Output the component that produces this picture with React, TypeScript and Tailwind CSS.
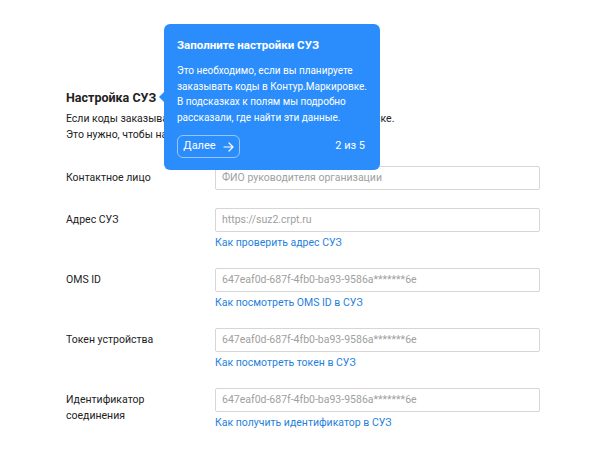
import React from "react";

const rows = [
  { label: "Контактное лицо", placeholder: "ФИО руководителя организации" },
  { label: "Адрес СУЗ", placeholder: "https://suz2.crpt.ru", link: "Как проверить адрес СУЗ" },
  { label: "OMS ID", placeholder: "647eaf0d-687f-4fb0-ba93-9586a*******6e", link: "Как посмотреть OMS ID в СУЗ" },
  { label: "Токен устройства", placeholder: "647eaf0d-687f-4fb0-ba93-9586a*******6e", link: "Как посмотреть токен в СУЗ" },
  { label: "Идентификатор соединения", placeholder: "647eaf0d-687f-4fb0-ba93-9586a*******6e", link: "Как получить идентификатор в СУЗ" },
];

function Hint() {
  return (
    <div className="absolute left-[164px] top-[24px] w-[216px] rounded-[6px] bg-[#2a8dfb] px-[13px] pt-[13px] pb-[12px] text-white">
      {/* arrow */}
      <div className="absolute left-[-5px] top-[68px] h-0 w-0 border-y-[5px] border-r-[5px] border-y-transparent border-r-[#2a8dfb]"></div>
      <div className="text-[11.5px] font-bold leading-[17px]">Заполните настройки СУЗ</div>
      <div className="mt-[9px] whitespace-nowrap text-[10px] leading-[15.5px]">
        Это необходимо, если вы планируете
        <br />
        заказывать коды в Контур.Маркировке.
        <br />
        В подсказках к полям мы подробно
        <br />
        рассказали, где найти эти данные.
      </div>
      <div className="mt-[10px] flex items-center justify-between">
        <button className="flex h-[23px] w-[63px] items-center justify-center gap-[7px] rounded-[6px] border border-white/50 text-[11px]">
          Далее
          <svg width="11" height="10" viewBox="0 0 11 10" fill="none" stroke="white" strokeWidth="1.2" strokeLinecap="round" strokeLinejoin="round">
            <path d="M1 5h9M6 1l4 4-4 4" />
          </svg>
        </button>
        <span className="pr-[2px] text-[11px]">2 из 5</span>
      </div>
    </div>
  );
}

export default function App() {
  return (
    <div className="relative h-[464px] w-[611px] overflow-hidden bg-white text-[#222] [font-family:Roboto,'Noto_Sans',sans-serif]">
      <div className="pl-[66px] pt-[88px]">
        <h2 className="text-[12.5px] font-bold leading-[20px]">Настройка СУЗ</h2>
        <p className="mt-[3px] text-[10.5px] leading-[16px]">
          Если коды заказываете в СУЗ, укажите его данные в Маркировке.
          <br />
          Это нужно, чтобы настроить обмен данными.
        </p>

        <div className="mt-[23px] flex flex-col gap-[17px]">
          {rows.map((r, i) => (
            <div key={i} className={`flex ${i === 0 ? "mb-[1px]" : ""}`}>
              <div className="w-[149px] pt-[4px] pr-[20px] text-[10.5px] leading-[15.5px]">{r.label}</div>
              <div className="w-[325px]">
                <div className="flex h-[24px] items-center rounded-[2px] border border-[#d6d6d6] px-[6px] text-[10.5px] text-[#a0a0a0]">
                  {r.placeholder}
                </div>
                {r.link && (
                  <div className="mt-[3px] text-[10.5px] leading-[16px] text-[#1f7fdd]">{r.link}</div>
                )}
              </div>
            </div>
          ))}
        </div>
      </div>
      <Hint />
    </div>
  );
}
